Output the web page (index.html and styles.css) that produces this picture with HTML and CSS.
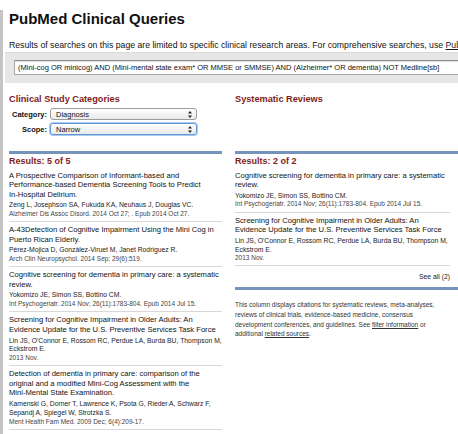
FILE: index.html
```html
<!DOCTYPE html>
<html lang="en">
<head>
<meta charset="utf-8">
<title>PubMed Clinical Queries</title>
<link rel="stylesheet" href="styles.css">
</head>
<body>
<div class="page">
  <h1 class="title">PubMed Clinical Queries</h1>
  <p class="intro">Results of searches on this page are limited to specific clinical research areas. For comprehensive searches, use <a href="#">PubMed</a> directly.</p>
  <div class="searchbar">
    <input class="query" type="text" value="(Mini-cog OR minicog) AND (Mini-mental state exam* OR MMSE or SMMSE) AND (Alzheimer* OR dementia) NOT Medline[sb]">
  </div>

  <div class="columns">
    <h2 class="col-head head-l">Clinical Study Categories</h2>
    <h2 class="col-head head-r">Systematic Reviews</h2>

    <div class="filters">
      <span class="f-label">Category:</span>
      <span class="select"><span class="select-text">Diagnosis</span><svg class="arrows" width="4" height="7" viewBox="0 0 4 7"><path d="M2 0 L4 2.6 L0 2.6 Z M2 7 L4 4.4 L0 4.4 Z" fill="#222"/></svg></span>
      <span class="f-label">Scope:</span>
      <span class="select focus"><span class="select-text">Narrow</span><svg class="arrows" width="4" height="7" viewBox="0 0 4 7"><path d="M2 0 L4 2.6 L0 2.6 Z M2 7 L4 4.4 L0 4.4 Z" fill="#222"/></svg></span>
    </div>

    <div class="rule rule-l"></div>
    <div class="rule rule-r"></div>

    <div class="body-l">
      <h3 class="res-head">Results: 5 of 5</h3>
      <ul class="results">
        <li class="item">
          <p class="it-title">A Prospective Comparison of Informant-based and Performance-based Dementia Screening Tools to Predict <span class="nobr">In-Hospital</span> Delirium.</p>
          <p class="it-auth">Zeng L, Josephson SA, Fukuda KA, Neuhaus J, Douglas VC.</p>
          <p class="it-src">Alzheimer Dis Assoc Disord. 2014 Oct 27; . Epub 2014 Oct 27.</p>
        </li>
        <li class="item">
          <p class="it-title">A-43Detection of Cognitive Impairment Using the Mini Cog in Puerto Rican Elderly.</p>
          <p class="it-auth">Pérez-Mojica D, González-Viruet M, Janet Rodriguez R.</p>
          <p class="it-src">Arch Clin Neuropsychol. 2014 Sep; 29(6):519.</p>
        </li>
        <li class="item">
          <p class="it-title">Cognitive screening for dementia in primary care: a systematic review.</p>
          <p class="it-auth">Yokomizo JE, Simon SS, Bottino CM.</p>
          <p class="it-src">Int Psychogeriatr. 2014 Nov; 26(11):1783-804. Epub 2014 Jul 15.</p>
        </li>
        <li class="item">
          <p class="it-title">Screening for Cognitive Impairment in Older Adults: An Evidence Update for the U.S. Preventive Services Task Force</p>
          <p class="it-auth">Lin JS, O'Connor E, Rossom RC, Perdue LA, Burda BU, <span class="nobr">Thompson M,</span> Eckstrom E.</p>
          <p class="it-src">2013 Nov.</p>
        </li>
        <li class="item">
          <p class="it-title">Detection of dementia in primary care: comparison of the original and a modified Mini-Cog Assessment with the <span class="nobr">Mini-Mental</span> State Examination.</p>
          <p class="it-auth">Kamenski G, Dorner T, Lawrence K, Psota G, Rieder A, Schwarz F, Sepandj A, Spiegel W, Strotzka S.</p>
          <p class="it-src">Ment Health Fam Med. 2009 Dec; 6(4):209-17.</p>
        </li>
      </ul>
    </div>

    <div class="body-r">
      <h3 class="res-head">Results: 2 of 2</h3>
      <ul class="results">
        <li class="item">
          <p class="it-title">Cognitive screening for dementia in primary care: a systematic review.</p>
          <p class="it-auth">Yokomizo JE, Simon SS, Bottino CM.</p>
          <p class="it-src">Int Psychogeriatr. 2014 Nov; 26(11):1783-804. Epub 2014 Jul 15.</p>
        </li>
        <li class="item">
          <p class="it-title">Screening for Cognitive Impairment in Older Adults: An Evidence Update for the U.S. Preventive Services Task Force</p>
          <p class="it-auth">Lin JS, O'Connor E, Rossom RC, Perdue LA, Burda BU, <span class="nobr">Thompson M,</span> Eckstrom E.</p>
          <p class="it-src">2013 Nov.</p>
        </li>
      </ul>
      <p class="see-all">See all (2)</p>
      <div class="rule rule-r"></div>
      <p class="note">This column displays citations for systematic reviews, meta-analyses, reviews of clinical trials, evidence-based medicine, consensus development conferences, and guidelines. See <a href="#">filter information</a> or additional <a href="#">related sources</a>.</p>
    </div>
  </div>
</div>
</body>
</html>
```
FILE: styles.css
```css
html, body {
  margin: 0;
  padding: 0;
  background: #fff;
  overflow: hidden;
}
body {
  font-family: "Liberation Sans", Arial, sans-serif;
  color: #111;
}
.page {
  margin-top: 4px;
  border-left: 3px solid #c4c4c4;
  padding-left: 6px;
  width: 620px;
  min-height: 440px;
}
.title {
  margin: 10px 0 0;
  font-size: 15px;
  line-height: 18px;
  font-weight: bold;
  color: #111;
}
.intro {
  margin: 12px 0 0;
  font-size: 8.7px;
  line-height: 10px;
  white-space: nowrap;
  color: #111;
}
.intro a {
  color: #1a1a1a;
  text-decoration: underline;
}
.searchbar {
  margin: 2px 0 0 -4px;
  height: 31px;
  box-sizing: border-box;
  background: #e6e6e6;
  border-top: 1px solid #dadada;
  padding: 7px 0 0 9px;
}
.query {
  display: block;
  width: 500px;
  height: 15px;
  box-sizing: border-box;
  margin: 0;
  border: 1px solid #a8a8a8;
  border-top-color: #8e8e8e;
  box-shadow: inset 0 1px 1px rgba(0, 0, 0, 0.12);
  background: #fff;
  font-family: "Liberation Sans", Arial, sans-serif;
  font-size: 7.5px;
  color: #111;
  padding: 0 3px;
  outline: none;
}

.columns {
  display: grid;
  grid-template-columns: 213px 215px;
  column-gap: 13px;
  margin-top: 11px;
}
.col-head {
  margin: 0;
  font-size: 9.2px;
  line-height: 11px;
  font-weight: bold;
  color: #801d1d;
}
.head-l { grid-row: 1; grid-column: 1; }
.head-r { grid-row: 1; grid-column: 2; }

.filters {
  grid-row: 2;
  grid-column: 1;
  display: grid;
  grid-template-columns: 38px 147px;
  column-gap: 3px;
  row-gap: 3px;
  align-items: center;
  margin-top: 3px;
}
.f-label {
  text-align: right;
  font-size: 7.5px;
  font-weight: bold;
  color: #111;
}
.select {
  display: flex;
  align-items: center;
  justify-content: space-between;
  height: 12px;
  box-sizing: border-box;
  border: 1px solid #9c9c9c;
  border-radius: 3px;
  background: linear-gradient(#ffffff, #e9e9e9);
  padding: 0 4px 0 5px;
  font-size: 7.5px;
  color: #111;
}
.select.focus {
  border-color: #5f99d6;
  box-shadow: 0 0 0 1px #a8c8ee;
}
.arrows {
  display: block;
}

.rule {
  height: 3px;
  background: #7594bb;
}
.rule-l { grid-row: 3; grid-column: 1; margin-top: 16px; }
.columns > .rule-r { grid-row: 3; grid-column: 2; margin-top: 16px; }
.rule-r { margin-right: -30px; }

.body-l { grid-row: 4; grid-column: 1; }
.body-r { grid-row: 4; grid-column: 2; }

.res-head {
  margin: 2px 0 0;
  font-size: 9px;
  line-height: 11px;
  font-weight: bold;
  color: #801d1d;
}
.results {
  list-style: none;
  margin: 3.5px 0 0;
  padding: 0;
}
.item {
  padding: 3px 0 2.5px;
  border-bottom: 1px solid #d8d8d8;
}
.item:first-child {
  padding-top: 0;
}
.it-title {
  margin: 0;
  font-size: 7.6px;
  line-height: 9.6px;
  color: #111;
}
.nobr {
  white-space: nowrap;
}
.it-auth {
  margin: 2px 0 0;
  font-size: 6.8px;
  line-height: 8.8px;
  color: #222;
}
.it-src {
  margin: 0;
  font-size: 6.5px;
  line-height: 8.6px;
  color: #444;
}
.see-all {
  margin: 6px 0 0;
  text-align: right;
  font-size: 6.8px;
  line-height: 9px;
  color: #222;
}
.body-r .rule-r {
  margin-top: 6px;
}
.note {
  margin: 10px 0 0;
  font-size: 6.5px;
  line-height: 9.6px;
  color: #333;
}
.note a {
  color: #333;
  text-decoration: underline;
}
```
